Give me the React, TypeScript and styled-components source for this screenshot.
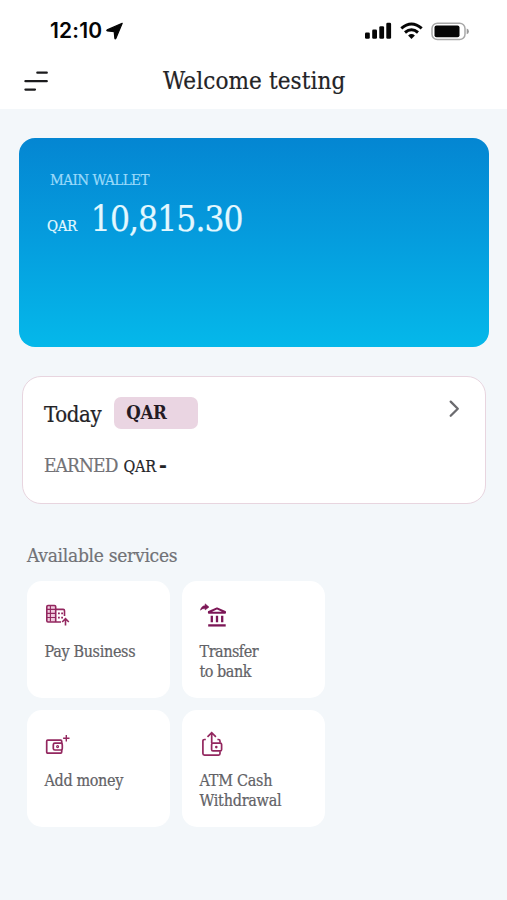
import React from "react";
import styled, { createGlobalStyle } from "styled-components";

const GlobalStyle = createGlobalStyle`
  * { box-sizing: border-box; }
  body { margin: 0; background: #f3f7fa; }
`;

const Screen = styled.div`
  width: 507px;
  height: 900px;
  overflow: hidden;
  background: #f3f7fa;
  color: #232326;
  font-family: "DejaVu Serif Condensed", "DejaVu Serif", serif;
  font-stretch: condensed;
  -webkit-text-stroke: 0.2px currentColor;
`;

const Header = styled.header`
  height: 109px;
  background: #fff;
`;

const StatusBar = styled.div`
  display: flex;
  align-items: center;
  justify-content: space-between;
  height: 62px;
  padding: 0 37px 0 50px;
`;

const Clock = styled.div`
  display: flex;
  align-items: center;
  gap: 4px;
  color: #050505;
  font: 600 21px/30px Inter, sans-serif;
  letter-spacing: 0.2px;
  -webkit-text-stroke: 0;
`;

const StatusIcons = styled.div`
  display: flex;
  align-items: center;
  gap: 8px;
`;

const TitleBar = styled.div`
  display: grid;
  grid-template-columns: 139px 1fr 139px;
  align-items: center;
  height: 38px;
  padding: 0 24px;
`;

const Title = styled.h1`
  margin: 0;
  font-size: 24px;
  font-weight: 400;
  line-height: 30px;
  letter-spacing: 0.1px;
  white-space: nowrap;
`;

const Icon = styled.svg`
  display: block;
  flex: none;
`;

const Wallet = styled.section`
  height: 209px;
  margin: 29px 18px 0 19px;
  padding: 32px 28px;
  border-radius: 16px;
  background: linear-gradient(180deg, #0486d2 0%, #059bdd 45%, #05b8ea 100%);
  color: #e3f8ff;
`;

const WalletLabel = styled.div`
  padding-left: 3px;
  font-size: 15px;
  line-height: 20px;
  letter-spacing: -0.52px;
  color: #9bdafa;
`;

const Balance = styled.div`
  display: flex;
  align-items: baseline;
  gap: 14px;
  margin-top: 7px;
  line-height: 44px;
`;

const Currency = styled.span`
  font-size: 15px;
  letter-spacing: -0.4px;
`;

const Amount = styled.span`
  font-size: 35px;
  letter-spacing: -0.92px;
`;

const Summary = styled.section`
  display: flex;
  justify-content: space-between;
  height: 128px;
  margin: 29px 21px 0 22px;
  padding: 20px 23px 0 21px;
  border: 1px solid #e8d5df;
  border-radius: 19px;
  background: #fff;
`;

const Period = styled.div`
  display: flex;
  gap: 13px;
  height: 32px;
`;

const PeriodName = styled.span`
  padding-top: 3px;
  font-size: 22px;
  line-height: 30px;
  letter-spacing: -0.35px;
`;

const CurrencyChip = styled.span`
  width: 84px;
  height: 32px;
  padding-left: 12px;
  border-radius: 7px;
  background: #ead5e2;
  color: #241a24;
  font-size: 18.5px;
  font-weight: 700;
  line-height: 31px;
  letter-spacing: -0.4px;
  -webkit-text-stroke: 0;
`;

const Earned = styled.div`
  display: flex;
  align-items: baseline;
  gap: 6px;
  margin-top: 21px;
  line-height: 30px;
`;

const EarnedLabel = styled.span`
  font-size: 19px;
  letter-spacing: -0.9px;
  color: #727276;
`;

const EarnedValue = styled.span`
  display: flex;
  align-items: baseline;
  gap: 3px;
  font-size: 16px;
  letter-spacing: -0.2px;
`;

const Dash = styled.b`
  font-size: 21px;
  line-height: 20px;
`;

const SectionTitle = styled.h2`
  margin: 36px 0 0 27px;
  color: #717276;
  font-size: 19px;
  font-weight: 400;
  line-height: 30px;
  letter-spacing: -0.27px;
`;

const Services = styled.div`
  display: grid;
  grid-template-columns: repeat(2, 143px);
  grid-auto-rows: 117px;
  gap: 12px;
  margin: 11px 0 0 26.5px;
`;

const Tile = styled.div`
  padding: 20px 0 0 18px;
  border-radius: 15px;
  background: #fff;
  color: #93275f;
`;

const TileLabel = styled.div<{ $tracking: number }>`
  margin-top: 11px;
  color: #626266;
  font-size: 16px;
  line-height: 20px;
  letter-spacing: ${(p) => p.$tracking}px;
  white-space: pre-line;
`;

const PayIcon = () => (
  <Icon width="30" height="30" viewBox="0 0 30 30" fill="none" stroke="currentColor" strokeWidth="1.6">
    <path d="M10.5 21H3Q1.8 21 1.8 19.8V5.7Q1.8 4.5 3 4.5H9.5Q10.7 4.5 10.7 5.7V21H16" fill="#efcbdd" />
    <path d="M5.4 5v15.5M2 8.4h8.5M2 12.4h8.5M2 16.5h8.5" strokeWidth="1.1" />
    <path d="M11 8.4h7.2q1.3 0 1.3 1.3v5.3" />
    <path d="M13 12.3h1.8M16.2 12.3H18M13 16.7h1.8M16.2 16.7H18" strokeWidth="1.8" />
    <path d="M20.5 24.5V18M17.2 21l3.3-3.3 3.3 3.3" />
  </Icon>
);

const BankIcon = () => (
  <Icon width="30" height="30" viewBox="0 0 30 30" fill="none" stroke="#7c1656" strokeWidth="2">
    <path d="M.4 9.2Q1.6 4.5 5.1 4.7V2.8L9 6.1 5.1 9V7.5Q2.4 7.2.4 9.2Z" fill="#7c1656" strokeWidth=".5" />
    <path d="M8.9 11.8V11L17 7.4 25 11v.8Z" strokeLinejoin="round" />
    <path d="M11.8 14.8v6.4M17 14.8v6.4M22.2 14.8v6.4" strokeWidth="2.3" />
    <path d="M8.2 24.4h17.5" strokeWidth="2.3" />
  </Icon>
);

const AddIcon = () => (
  <Icon width="30" height="30" viewBox="0 0 30 30" fill="none" stroke="currentColor" strokeWidth="1.7">
    <rect x="1.7" y="10.2" width="15" height="12.9" rx="1" />
    <rect x="8.3" y="13.2" width="9" height="6.8" rx="1.6" fill="#fff" />
    <circle cx="12.6" cy="16.6" r="1" strokeWidth="1.1" />
    <path d="M21.3 5v6.4M18.1 8.2h6.4" strokeWidth="1.4" />
  </Icon>
);

const WithdrawIcon = () => (
  <Icon width="30" height="30" viewBox="0 0 30 30" fill="none" stroke="currentColor" strokeWidth="1.7">
    <path d="M5.8 9.5H4.5Q2.9 9.5 2.9 11.1V23.6Q2.9 25.2 4.5 25.2H18.6Q20 25.2 20 23.6V21.2M20 12.8V11.1Q20 9.5 18.4 9.5H17.4" />
    <path d="M11.7 13V3M7.5 6.8l4.2-4.1 4.2 4.1" />
    <rect x="11.6" y="13.2" width="10" height="7.7" rx="1.4" />
    <circle cx="16.3" cy="17.1" r="1.3" fill="currentColor" stroke="none" />
  </Icon>
);

const SERVICES = [
  { label: "Pay Business", tracking: -0.33, Glyph: PayIcon },
  { label: "Transfer\nto bank", tracking: -0.47, Glyph: BankIcon },
  { label: "Add money", tracking: -0.35, Glyph: AddIcon },
  { label: "ATM Cash\nWithdrawal", tracking: -0.25, Glyph: WithdrawIcon },
];

export default function App() {
  return (
    <Screen>
      <GlobalStyle />
      <Header>
        <StatusBar>
          <Clock>
            12:10
            <Icon width="18" height="18" viewBox="0 0 18 18">
              <path d="M16.2 1.3 1.2 7.9Q.2 8.6 1.4 8.9L8.2 9.6 8.9 16.4Q9.2 17.5 9.8 16.5Z" fill="#050505" stroke="#050505" strokeWidth="1.2" strokeLinejoin="round" />
            </Icon>
          </Clock>
          <StatusIcons>
            <Icon width="28" height="18" viewBox="0 0 28 18" fill="#050505">
              <rect x="1" y="10.5" width="4.8" height="6.3" rx="1.3" />
              <rect x="8.2" y="7.6" width="4.8" height="9.2" rx="1.3" />
              <rect x="15.3" y="4.3" width="4.8" height="12.5" rx="1.3" />
              <rect x="22.3" y="0.8" width="4.8" height="16" rx="1.3" />
            </Icon>
            <Icon width="23" height="18" viewBox="0 0 23 18" fill="none" stroke="#050505" strokeWidth="3">
              <path d="M1.3 6.3Q11.5-2.4 21.7 6.3" />
              <path d="M5 10.5q6.5-5.6 13 0" />
              <path d="M8.1 13.4q3.4-2.7 6.8 0L11.5 17Z" fill="#050505" stroke="none" />
            </Icon>
            <Icon width="39" height="19" viewBox="0 0 39 19">
              <rect x="1" y="1.2" width="33" height="16.4" rx="5.4" fill="#fff" stroke="#a8a8a8" strokeWidth="1.5" />
              <rect x="3.5" y="3.6" width="25" height="11.6" rx="2" fill="#050505" />
              <path d="M35.7 6.5q2.2.8 2.2 2.9t-2.2 2.9Z" fill="#999" />
            </Icon>
          </StatusIcons>
        </StatusBar>
        <TitleBar>
          <Icon width="25" height="22" viewBox="0 0 25 22" fill="none" stroke="#1b1b1d" strokeWidth="2.2" strokeLinecap="round">
            <path d="M13.3 2.7H22.8M1.4 11.2H22.8M1.4 19.6H11" />
          </Icon>
          <Title>Welcome testing</Title>
        </TitleBar>
      </Header>

      <Wallet>
        <WalletLabel>MAIN WALLET</WalletLabel>
        <Balance>
          <Currency>QAR</Currency>
          <Amount>10,815.30</Amount>
        </Balance>
      </Wallet>

      <Summary>
        <div>
          <Period>
            <PeriodName>Today</PeriodName>
            <CurrencyChip>QAR</CurrencyChip>
          </Period>
          <Earned>
            <EarnedLabel>EARNED</EarnedLabel>
            <EarnedValue>
              QAR <Dash>-</Dash>
            </EarnedValue>
          </Earned>
        </div>
        <Icon width="14" height="24" viewBox="0 0 14 24" fill="none" stroke="#6b6b6f" strokeWidth="2.3" strokeLinecap="round" strokeLinejoin="round">
          <path d="M2.7 4.6 9.8 11.8 2.7 18.8" />
        </Icon>
      </Summary>

      <SectionTitle>Available services</SectionTitle>
      <Services>
        {SERVICES.map(({ label, tracking, Glyph }) => (
          <Tile key={label}>
            <Glyph />
            <TileLabel $tracking={tracking}>{label}</TileLabel>
          </Tile>
        ))}
      </Services>
    </Screen>
  );
}
